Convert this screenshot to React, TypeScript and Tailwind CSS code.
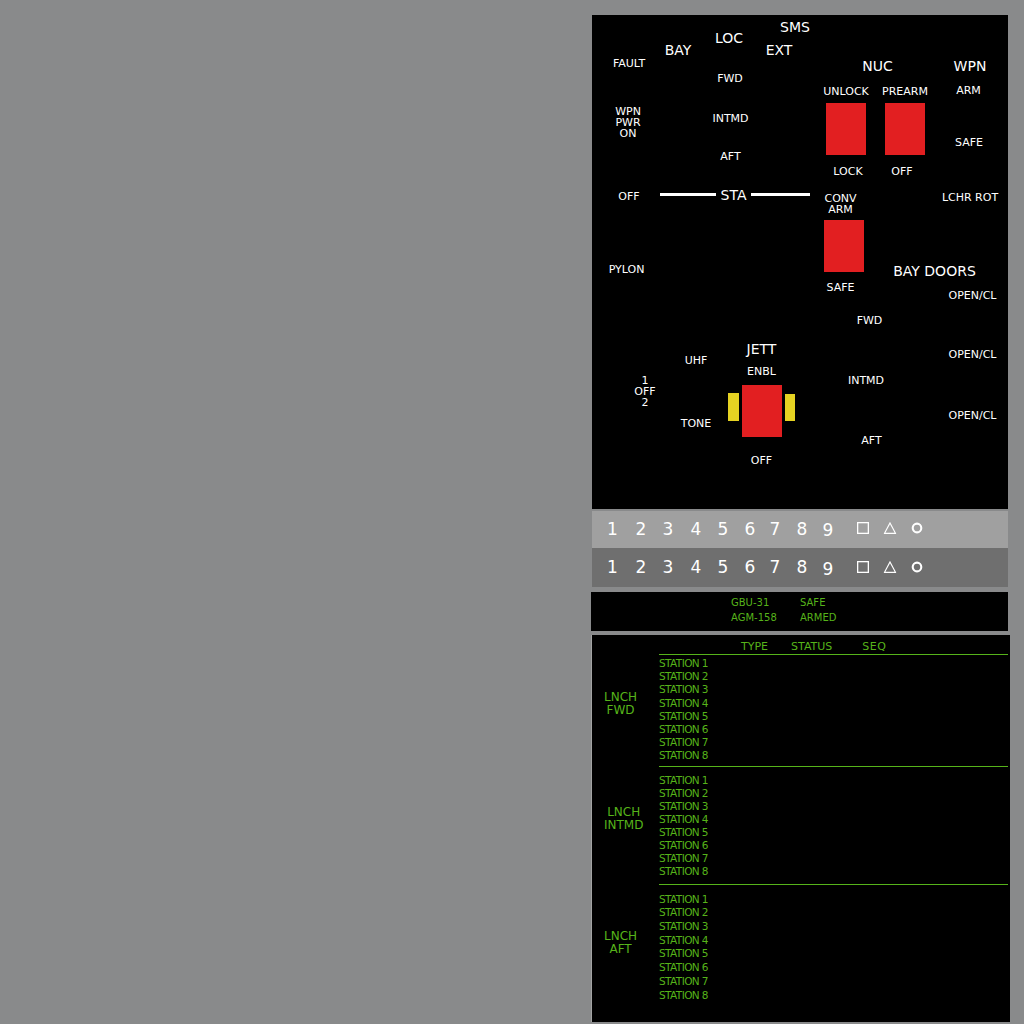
import React from "react";

type Lbl = { t: string; x: number; y: number; big?: boolean };

const labels: Lbl[] = [
  { t: "SMS", x: 203, y: 12, big: true },
  { t: "LOC", x: 137, y: 23, big: true },
  { t: "BAY", x: 86, y: 35, big: true },
  { t: "EXT", x: 187, y: 35, big: true },
  { t: "NUC", x: 285.5, y: 51, big: true },
  { t: "WPN", x: 378, y: 51, big: true },
  { t: "STA", x: 141.5, y: 180, big: true },
  { t: "BAY DOORS", x: 342.5, y: 256, big: true },
  { t: "JETT", x: 169.5, y: 334, big: true },
  { t: "FAULT", x: 37, y: 48 },
  { t: "FWD", x: 138, y: 63 },
  { t: "WPN\nPWR\nON", x: 36, y: 107 },
  { t: "INTMD", x: 138.5, y: 103 },
  { t: "AFT", x: 138.5, y: 141 },
  { t: "OFF", x: 37, y: 180.5 },
  { t: "PYLON", x: 34.5, y: 253.5 },
  { t: "UNLOCK", x: 254, y: 76 },
  { t: "PREARM", x: 313, y: 76 },
  { t: "ARM", x: 376.5, y: 75 },
  { t: "SAFE", x: 377, y: 127 },
  { t: "LOCK", x: 256, y: 156 },
  { t: "OFF", x: 310, y: 156 },
  { t: "CONV\nARM", x: 248.5, y: 188.5 },
  { t: "LCHR ROT", x: 378, y: 182 },
  { t: "SAFE", x: 248.5, y: 272 },
  { t: "OPEN/CL", x: 380.5, y: 280 },
  { t: "FWD", x: 277.5, y: 305 },
  { t: "OPEN/CL", x: 380.5, y: 338.5 },
  { t: "UHF", x: 104, y: 345 },
  { t: "ENBL", x: 169.5, y: 356 },
  { t: "1\nOFF\n2", x: 53, y: 376 },
  { t: "INTMD", x: 274, y: 365 },
  { t: "OPEN/CL", x: 380.5, y: 400 },
  { t: "TONE", x: 104, y: 408 },
  { t: "AFT", x: 279.5, y: 425 },
  { t: "OFF", x: 169.5, y: 445 },
];

type Box = { x: number; y: number; w: number; h: number; c: string };
const boxes: Box[] = [
  { x: 234, y: 88, w: 40, h: 52, c: "red" },
  { x: 293, y: 88, w: 40, h: 52, c: "red" },
  { x: 232, y: 205, w: 40, h: 52, c: "red" },
  { x: 150, y: 370, w: 40, h: 52, c: "red" },
  { x: 136, y: 378, w: 11, h: 28, c: "yellow" },
  { x: 193, y: 379, w: 10, h: 27, c: "yellow" },
  { x: 68, y: 178, w: 56, h: 3, c: "white" },
  { x: 159, y: 178, w: 59, h: 3, c: "white" },
];

const digits = [
  { t: "1", x: 20.5, dy: 0 },
  { t: "2", x: 49, dy: 0 },
  { t: "3", x: 76, dy: 0 },
  { t: "4", x: 104, dy: 0 },
  { t: "5", x: 131, dy: 0 },
  { t: "6", x: 158, dy: 0 },
  { t: "7", x: 183, dy: 0 },
  { t: "8", x: 210, dy: 0 },
  { t: "9", x: 236, dy: 1.5 },
];

function NumberRow({ bg, cy }: { bg: string; cy: number }) {
  return (
    <div className={`relative w-[416px] ml-[1px] text-white ${bg}`}>
      {digits.map((d) => (
        <span
          key={d.t}
          className="absolute -translate-x-1/2 -translate-y-1/2 leading-none text-[17px]"
          style={{ left: d.x, top: cy + d.dy }}
        >
          {d.t}
        </span>
      ))}
      <svg
        className="absolute -translate-x-1/2 -translate-y-1/2"
        style={{ left: 271, top: cy - 0.5 }}
        width="12"
        height="12"
        viewBox="0 0 12 12"
      >
        <rect x="0.65" y="0.65" width="10.7" height="10.7" fill="none" stroke="white" strokeWidth="1.3" />
      </svg>
      <svg
        className="absolute -translate-x-1/2 -translate-y-1/2"
        style={{ left: 298, top: cy - 0.5 }}
        width="13"
        height="12"
        viewBox="0 0 13 12"
      >
        <path d="M6.5 1 L12 11.3 L1 11.3 Z" fill="none" stroke="white" strokeWidth="1.2" strokeLinejoin="miter" />
      </svg>
      <svg
        className="absolute -translate-x-1/2 -translate-y-1/2"
        style={{ left: 325, top: cy - 0.5 }}
        width="12"
        height="12"
        viewBox="0 0 12 12"
      >
        <ellipse cx="6" cy="6" rx="4.3" ry="4.4" fill="none" stroke="white" strokeWidth="2.1" />
      </svg>
    </div>
  );
}

function Section({
  label,
  pt,
  lblPt,
  pb,
  lead,
}: {
  label: string[];
  pt: string;
  lblPt: string;
  pb: string;
  lead: string;
}) {
  return (
    <div className="flex">
      <div className={`w-[67px] pl-[12px] ${lblPt}`}>
        <div className="inline-block text-center text-[12px] leading-[12.5px]">
          {label.map((l) => (
            <div key={l}>{l}</div>
          ))}
        </div>
      </div>
      <div className={`w-[349px] border-t border-[#56b31a] ${pt} ${pb}`}>
        {[1, 2, 3, 4, 5, 6, 7, 8].map((n) => (
          <div key={n} className={`text-[10.5px] tracking-[-0.6px] ${lead}`}>
            STATION {n}
          </div>
        ))}
      </div>
    </div>
  );
}

export default function App() {
  return (
    <div className="w-[1024px] h-[1024px] overflow-hidden bg-[#898a8b] pl-[591px] pt-[15px] font-['DejaVu_Sans',sans-serif]">
      {/* Top panel */}
      <div className="relative ml-[1px] w-[416px] h-[494px] bg-black text-white">
        {boxes.map((b, i) => (
          <div
            key={i}
            className={`absolute ${
              b.c === "red" ? "bg-[#e21f21]" : b.c === "yellow" ? "bg-[#e5d222]" : "bg-white"
            }`}
            style={{ left: b.x, top: b.y, width: b.w, height: b.h }}
          />
        ))}
        {labels.map((l, i) => (
          <div
            key={i}
            className={`absolute -translate-x-1/2 -translate-y-1/2 whitespace-pre text-center ${
              l.big ? "text-[14px] leading-none" : "text-[11px] leading-[11px]"
            }`}
            style={{ left: l.x, top: l.y }}
          >
            {l.t}
          </div>
        ))}
      </div>

      {/* Number rows */}
      <div className="mt-[2px] flex flex-col">
        <div className="h-[37px] flex">
          <NumberRow bg="bg-[#a0a0a0] h-[37px]" cy={17.7} />
        </div>
        <div className="h-[39px] flex">
          <NumberRow bg="bg-[#6f6f6f] h-[39px]" cy={19} />
        </div>
      </div>

      {/* Green status panel */}
      <div className="mt-[5px] w-[417px] h-[39px] bg-black text-[#56b31a] text-[10px] leading-[14px] pt-[4px] pl-[140px]">
        <div className="grid grid-cols-[69px_80px]">
          <div>GBU-31</div>
          <div>SAFE</div>
          <div className="mt-[1px]">AGM-158</div>
          <div className="mt-[1px]">ARMED</div>
        </div>
      </div>

      {/* Launcher panel */}
      <div className="mt-[4px] w-[419px] h-[387px] bg-black text-[#56b31a] border-l border-[#a3a3a3]">
        <div className="h-[19px] pt-[5px] text-[11px] leading-[14px]">
          <div className="flex">
            <span className="ml-[149px]">TYPE</span>
            <span className="ml-[23px]">STATUS</span>
            <span className="ml-[30px] tracking-[0.5px]">SEQ</span>
          </div>
        </div>
        <Section label={["LNCH", "FWD"]} lblPt="pt-[37px]" pt="pt-[2px]" pb="pb-[3.5px]" lead="leading-[13.2px]" />
        <Section label={["LNCH", "INTMD"]} lblPt="pt-[40px]" pt="pt-[7px]" pb="pb-[6px]" lead="leading-[13px]" />
        <Section label={["LNCH", "AFT"]} lblPt="pt-[46px]" pt="pt-[7.5px]" pb="pb-[0px]" lead="leading-[13.7px]" />
      </div>
    </div>
  );
}
